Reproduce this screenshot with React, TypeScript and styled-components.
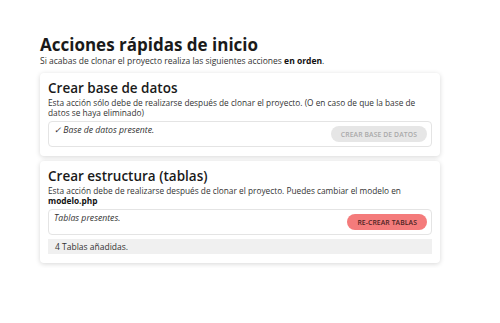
import React from 'react'
import styled, { createGlobalStyle } from 'styled-components'

const GlobalStyle = createGlobalStyle`
  html, body {
    margin: 0;
    padding: 0;
    background: #ffffff;
  }
  body {
    font-family: 'Open Sans', 'Liberation Sans', sans-serif;
    color: #222222;
  }
`

interface Action {
  title: string
  description: React.ReactNode
  status: string
  buttonLabel: string
  active: boolean
  result?: string
}

const actions: Action[] = [
  {
    title: 'Crear base de datos',
    description: 'Esta acción sólo debe de realizarse después de clonar el proyecto. (O en caso de que la base de datos se haya eliminado)',
    status: '✓ Base de datos presente.',
    buttonLabel: 'Crear base de datos',
    active: false,
  },
  {
    title: 'Crear estructura (tablas)',
    description: (
      <>
        Esta acción debe de realizarse después de clonar el proyecto. Puedes cambiar el modelo en{' '}
        <strong>modelo.php</strong>
      </>
    ),
    status: 'Tablas presentes.',
    buttonLabel: 'Re-crear tablas',
    active: true,
    result: '4 Tablas añadidas.',
  },
]

const App: React.FC = () => {
  return (
    <>
      <GlobalStyle />
      <Page>
        <Title>Acciones rápidas de inicio</Title>
        <Subtitle>
          Si acabas de clonar el proyecto realiza las siguientes acciones <strong>en orden</strong>.
        </Subtitle>

        {actions.map(action => (
          <Card key={action.title}>
            <CardTitle>{action.title}</CardTitle>
            <CardText>{action.description}</CardText>
            <StatusBox>
              <StatusText>{action.status}</StatusText>
              <PillButton active={action.active}>{action.buttonLabel}</PillButton>
            </StatusBox>
            {action.result && <ResultBar>{action.result}</ResultBar>}
          </Card>
        ))}
      </Page>
    </>
  )
}

export default App

// ========================================
// STYLED COMPONENTS
// ========================================

const Page = styled.div`
  width: 400px;
  padding: 34px 40px 0;
`

const Title = styled.h1`
  font-size: 17px;
  font-weight: 700;
  line-height: 22px;
  margin: 0;
  color: #1a1a1a;
`

const Subtitle = styled.p`
  font-size: 8.5px;
  line-height: 10px;
  margin: 0 0 7px;
  color: #333333;

  strong {
    font-weight: 700;
    color: #111111;
  }
`

const Card = styled.div`
  background: #ffffff;
  border-radius: 4px;
  box-shadow: 0 1px 5px rgba(0, 0, 0, 0.16);
  padding: 7px 8px 9px;
  margin-bottom: 5px;
`

const CardTitle = styled.h2`
  font-size: 13.5px;
  font-weight: 600;
  line-height: 17px;
  margin: 0 0 1px;
  color: #1a1a1a;
`

const CardText = styled.p`
  font-size: 8.3px;
  line-height: 10px;
  margin: 0 0 3px;
  color: #333333;

  strong {
    font-weight: 700;
    color: #111111;
  }
`

const StatusBox = styled.div`
  display: flex;
  justify-content: space-between;
  align-items: flex-start;
  border: 1px solid #e4e4e4;
  border-radius: 4px;
  padding: 3px 4px 4px 5px;
`

const StatusText = styled.span`
  font-size: 8.7px;
  line-height: 11px;
  font-style: italic;
  color: #333333;
`

const PillButton = styled.button<{ active: boolean }>`
  border: none;
  border-radius: 9px;
  height: 16px;
  margin-top: 1px;
  padding: 0 10px;
  font-family: inherit;
  font-size: 6.8px;
  font-weight: 600;
  text-transform: uppercase;
  letter-spacing: 0.1px;
  background: ${props => (props.active ? '#f47b7b' : '#e6e6e6')};
  color: ${props => (props.active ? '#4a2323' : '#a9a9a9')};
  cursor: ${props => (props.active ? 'pointer' : 'default')};
`

const ResultBar = styled.div`
  margin-top: 4px;
  background: #f0f0f0;
  font-size: 8.5px;
  line-height: 15px;
  padding: 0 7px;
  color: #333333;
`
